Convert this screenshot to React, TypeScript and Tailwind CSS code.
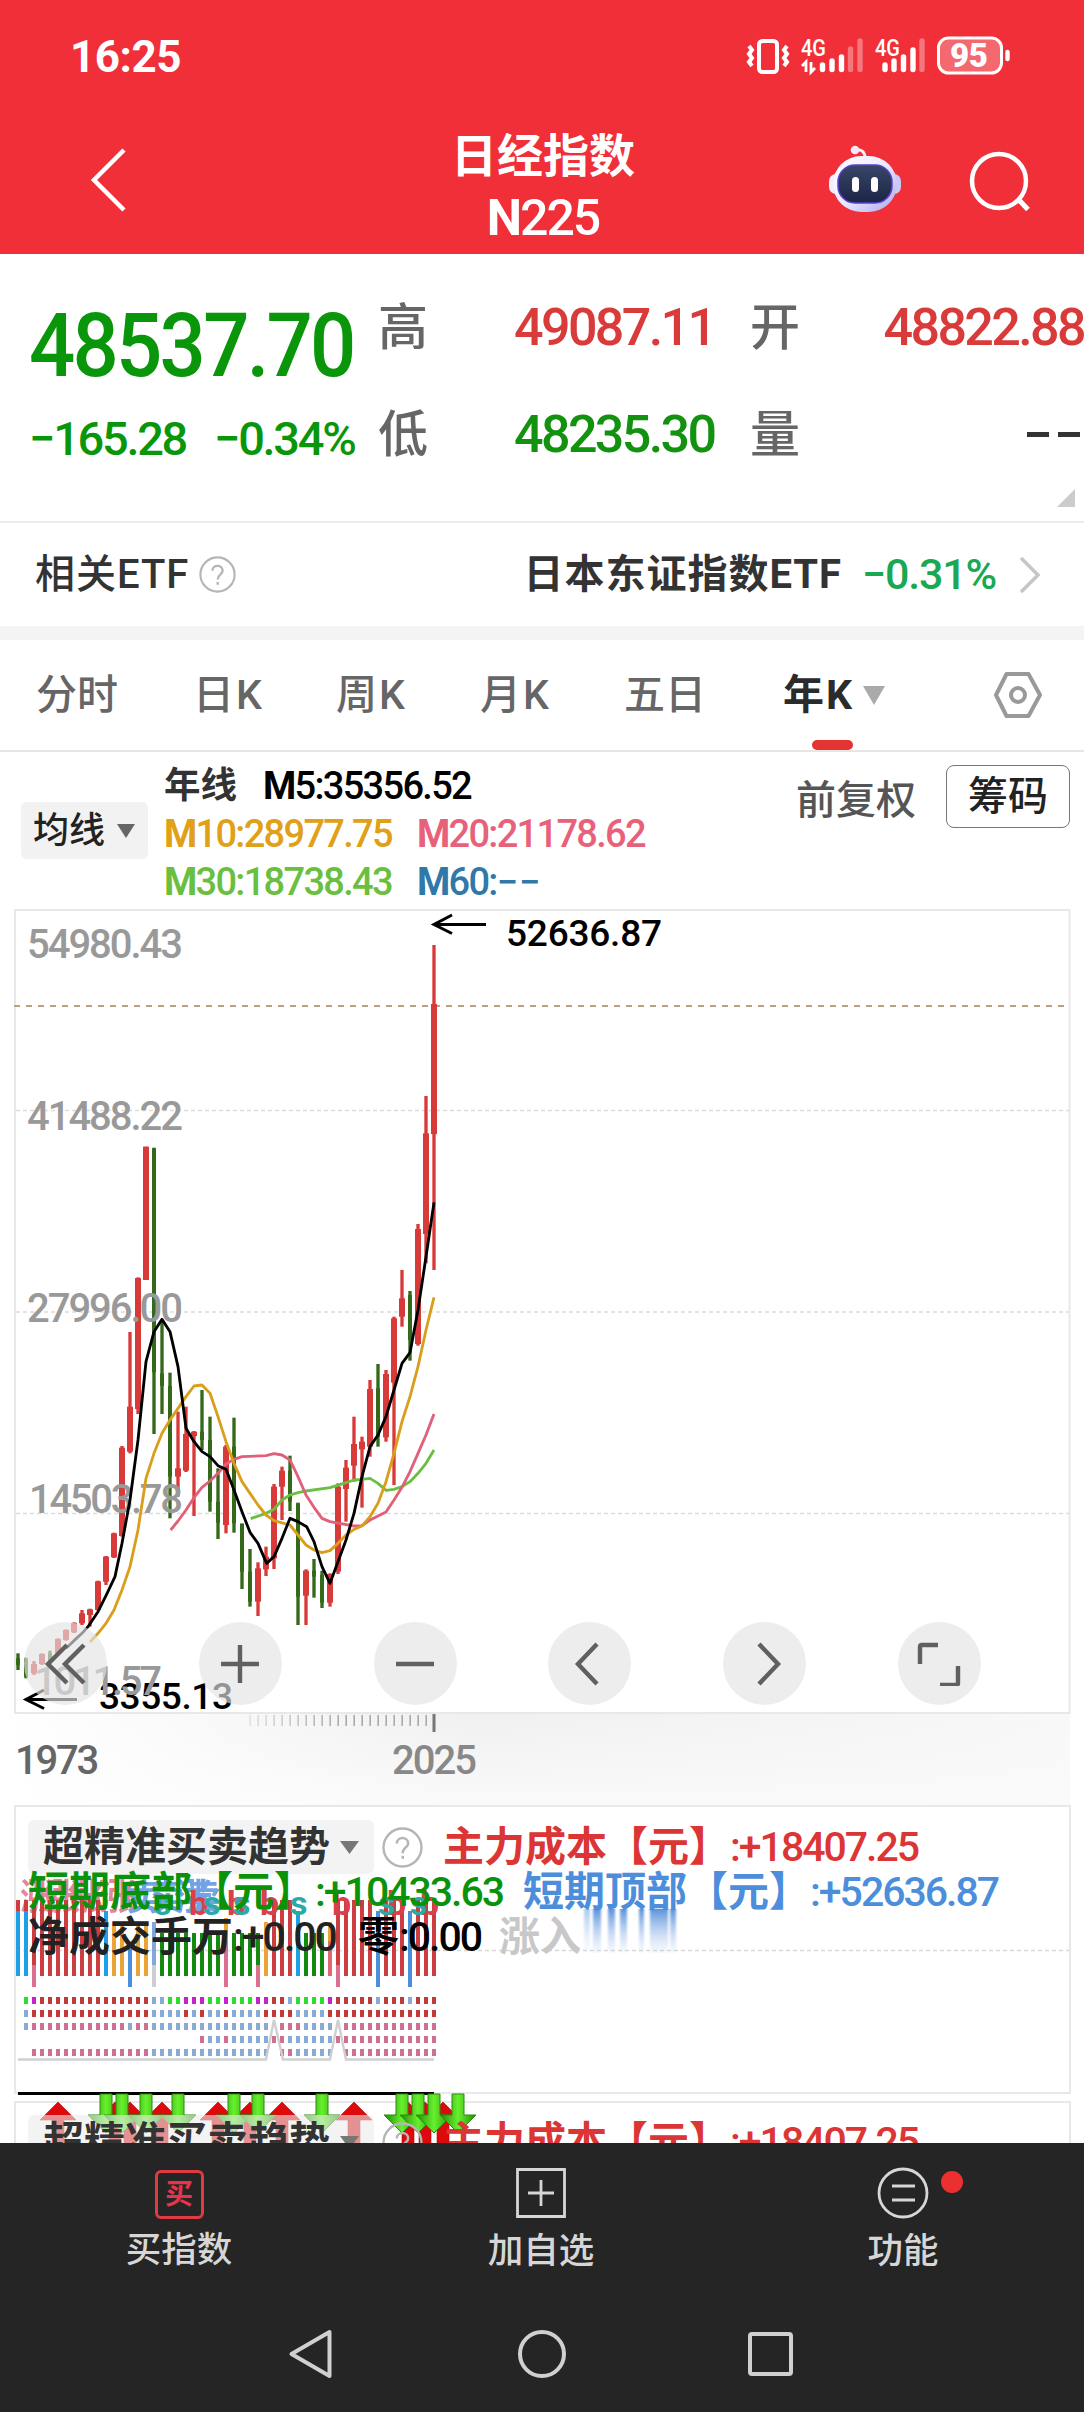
import type { ReactNode } from 'react'

const RED = '#d83a3a'
const GREEN = '#35691a'

// [高, 実体上, 実体下, 安] / up = 陽線
type Candle = [number, number, number, number, boolean]

const candles: Candle[] = [
  [1060, 1075, 1095, 1110, false],
  [1073, 1078, 1130, 1135, false],
  [1083, 1092, 1120, 1125, true],
  [1060, 1062, 1092, 1095, true],
  [1052, 1060, 1085, 1090, false],
  [1015, 1017, 1060, 1062, true],
  [988, 990, 1020, 1022, true],
  [967, 969, 997, 999, true],
  [930, 940, 970, 975, true],
  [926, 928, 945, 980, true],
  [842, 844, 930, 932, true],
  [768, 770, 845, 855, true],
  [698, 700, 772, 774, true],
  [438, 443, 708, 710, true],
  [96, 320, 455, 460, true],
  [-68, -66, 327, 342, true],
  [-460, -460, -60, -60, true],
  [-457, -455, 217, 402, false],
  [65, 220, 258, 342, false],
  [218, 258, 530, 655, false],
  [335, 505, 530, 590, true],
  [320, 402, 512, 516, true],
  [393, 395, 408, 648, true],
  [270, 395, 420, 450, false],
  [350, 420, 605, 635, false],
  [505, 605, 668, 717, false],
  [435, 440, 675, 700, true],
  [353, 440, 670, 698, false],
  [670, 672, 815, 867, false],
  [747, 815, 905, 920, false],
  [787, 805, 905, 948, true],
  [740, 770, 808, 828, true],
  [552, 560, 775, 807, true],
  [500, 512, 560, 660, true],
  [467, 512, 605, 633, false],
  [608, 610, 890, 975, false],
  [808, 812, 887, 975, true],
  [777, 812, 830, 893, false],
  [812, 825, 908, 924, false],
  [820, 822, 908, 920, true],
  [550, 560, 815, 822, true],
  [480, 503, 567, 665, true],
  [350, 432, 497, 545, true],
  [410, 425, 448, 623, true],
  [240, 267, 440, 470, true],
  [192, 265, 410, 440, false],
  [210, 222, 412, 425, true],
  [50, 55, 248, 555, true],
  [-90, -5, 50, 80, true],
  [-27, -15, 120, 182, false],
  [-228, -213, 132, 137, true],
  [-612, -500, -198, -110, true],
  [-1065, -888, -498, -90, true],
]

const ma5 =
  '198,1045 222,1022 246,1000 264,980 294,935 318,887 345,830 366,730 390,600 414,420 438,185 462,95 486,58 510,95 534,200 558,385 582,425 606,455 630,470 654,497 678,508 702,570 726,635 750,697 774,730 800,790 822,770 846,715 870,655 894,665 920,680 942,725 966,800 990,850 1014,785 1038,720 1062,640 1086,530 1110,440 1134,405 1158,350 1182,270 1206,190 1230,158 1254,30 1278,-130 1302,-293'
const ma10 =
  '270,1026 294,1000 318,970 342,930 366,870 390,800 414,690 438,535 462,460 486,400 510,360 534,325 558,290 582,258 606,255 630,280 654,350 678,425 702,490 726,545 750,580 774,615 798,645 822,662 870,675 894,705 918,735 942,750 966,758 990,752 1014,730 1038,705 1062,688 1086,678 1110,650 1134,610 1158,545 1182,460 1206,365 1230,290 1254,200 1278,90 1302,-8'
const ma20 =
  '512,690 534,663 558,630 582,593 606,562 630,543 654,520 678,492 702,478 726,470 798,467 822,461 846,465 870,480 894,530 918,585 942,622 966,655 990,665 1062,678 1086,677 1110,660 1158,636 1182,600 1206,562 1230,515 1254,460 1278,405 1302,342'
const ma30 =
  '752,656 798,640 822,628 846,600 870,585 894,578 918,573 990,563 1038,548 1062,540 1086,538 1110,535 1134,550 1158,571 1182,568 1206,560 1230,545 1254,520 1278,490 1302,450'

// 副图: r 红 b 蓝 o 橙 d 深蓝 y 灰 g 绿 p 粉
const bars = 'bbprrrrrrrrboodooyggggggggpgggporrrbgggkprrrrdrrrdrrr'

const dotRows = [
  '.gmrrrrrrrrrrrrrrbbggmmmggmgggmmrrbggggmrrrrrbrrrbrrr',
  '.brrrrrrrrrrrrrrrbbbbrbrbbrbbbbrrrrbbbbrrrrrrrrrrrrrr',
  '.bppppppppppppbppbbbbbbbbbbbbbbb.pppbbbb.pppppppppppp',
  '.......................pbbpbbbbbppbbbbbbpppppppppppp',
  '..pppppppppppppppbbbbbbbbbbbbbbb.ppbbbbb.pppppppppppp',
].map((row) => row.padEnd(53, 'p'))

const dotColor: Record<string, string> = {
  g: '#28e02c',
  m: '#c81fd0',
  r: '#c03a3a',
  b: '#86abd9',
  p: '#cf6f92',
}

const upArrows = [58, 115, 130, 162, 218, 250, 282, 354, 408, 425, 443]
const downArrows = [106, 122, 146, 178, 234, 258, 322, 402, 418, 434, 458]

function Bar({ k, i }: { k: string; i: number }) {
  const x = 16 + i * 8
  const rect = (y: number, b: number, fill: string) => (
    <rect key={fill + y} x={x} y={y} width={4} height={b - y} fill={fill} />
  )
  switch (k) {
    case 'r':
      return rect(1899, 1975, '#cc3d42')
    case 'b':
      return (
        <g>
          {i < 2 && rect(1899, 1910, '#cc3d42')}
          {rect(1910, 1975, '#1e9fe6')}
        </g>
      )
    case 'g':
      return rect(1932, 1975, '#14890f')
    case 'o':
      return rect(1921, 1975, '#eba437')
    case 'k':
      return <g>{rect(1921, 1940, '#eba437')}{rect(1940, 1975, '#dd6a72')}</g>
    case 'd':
      return <g>{rect(i > 40 ? 1910 : 1948, 1986, '#4a8fdc')}</g>
    case 'y':
      return <g>{rect(1921, 1964, '#7fa8dd')}{rect(1964, 1986, '#cdcdd2')}</g>
    default:
      return (
        <g>
          {i === 26 ? rect(1917, 1940, '#eba437') : rect(i === 30 ? 1932 : 1899, 1964, i === 30 ? '#14890f' : '#cc3d42')}
          {rect(i === 26 ? 1940 : 1964, 1986, '#da6f90')}
        </g>
      )
  }
}

function StatusBar() {
  return (
    <div className="flex h-[113px] items-center pl-[70px] pr-[73px]">
      <span className="mt-px text-[44px] font-bold leading-none tracking-[-0.5px]">16:25</span>
      <svg className="ml-auto" width="265" height="42" viewBox="746 36 265 42" fill="none">
        <rect x="759" y="41" width="18" height="31" rx="3.5" stroke="#fff" strokeWidth="4" />
        <path d="M749 46l3 4-3 4 3 4-3 4 3 4M787 46l-3 4 3 4-3 4 3 4-3 4" stroke="#fff" strokeWidth="4" />
        <text x="801" y="56" fill="#fff" fontSize="23" fontWeight="500" textLength="25" lengthAdjust="spacingAndGlyphs">4G</text>
        <text x="875" y="56" fill="#fff" fontSize="23" fontWeight="500" textLength="25" lengthAdjust="spacingAndGlyphs">4G</text>
        <path d="M806 72V62l-4 4M811 62v10l4-4" stroke="#fff" strokeWidth="2.8" />
        <g stroke="#fff" strokeWidth="5.4" strokeLinecap="round">
          <path d="M822.5 65v4.500M832 61v8.500M841.500 57v12.500M885 65v4.500M894 61v8.500M903.500 57v12.500M913 50v19.500" />
          <path opacity=".35" d="M850.500 49v20.500M860 41v28.500M922 41v28.500" />
        </g>
        <rect x="938.500" y="38" width="63" height="35" rx="10" fill="#fff" fillOpacity=".28" stroke="#fff" strokeWidth="3" />
        <path d="M1007.500 52v7" stroke="#fff" strokeWidth="4.400" strokeLinecap="round" />
        <text x="950" y="67" fill="#fff" fontSize="33" fontWeight="900" textLength="38">95</text>
      </svg>
    </div>
  )
}

function Robot() {
  return (
    <svg width="74" height="70" viewBox="0 0 74 70">
      <defs>
        <linearGradient id="head" x1="0" y1="0" x2="1" y2="1">
          <stop offset="0" stopColor="#fff" />
          <stop offset=".5" stopColor="#ecebff" />
          <stop offset="1" stopColor="#a9a4f0" />
        </linearGradient>
        <linearGradient id="face" x1="0" y1="0" x2="0" y2="1">
          <stop offset="0" stopColor="#3a4668" />
          <stop offset="1" stopColor="#1b2545" />
        </linearGradient>
      </defs>
      <path d="M27 6c7-1 10 2 10 8" fill="none" stroke="#f6efff" strokeWidth="3" />
      <circle cx="27" cy="6" r="4.300" fill="#f3e9fb" />
      <rect x="1" y="30" width="14" height="20" rx="7" fill="#eeeefc" />
      <rect x="59" y="30" width="14" height="20" rx="7" fill="#c9c8f6" />
      <rect x="5" y="12" width="64" height="56" rx="28" fill="url(#head)" />
      <rect x="10" y="21" width="54" height="38" rx="17" fill="url(#face)" stroke="#5a3fd0" strokeWidth="1.500" />
      <rect x="24" y="33" width="7" height="15" rx="3.500" fill="#fff" />
      <rect x="43" y="33" width="7" height="15" rx="3.500" fill="#fff" />
    </svg>
  )
}

function Header() {
  return (
    <header className="h-[254px] bg-[#f02f38] text-white">
      <StatusBar />
      <div className="flex h-[141px] items-start px-[51px]">
        <svg className="mt-[31px] ml-[38px]" width="40" height="70" viewBox="0 0 40 70" fill="none">
          <path d="M35 6L5 36l30 30" stroke="#fff" strokeWidth="4.500" />
        </svg>
        <div className="ml-[252px] w-[324px] text-center leading-none">
          <div className="mt-[20px] text-[46px] font-bold">日经指数</div>
          <div className="mt-[14px] text-[50px] font-medium tracking-[-2px]">
            <b>N</b>225
          </div>
        </div>
        <div className="mt-[31px] ml-[123px]">
          <Robot />
        </div>
        <svg className="mt-[37px] ml-[67px]" width="64" height="66" viewBox="0 0 64 66" fill="none">
          <circle cx="30" cy="31" r="27" stroke="#fff" strokeWidth="4.500" />
          <path d="M50 50l9 9.500" stroke="#fff" strokeWidth="5" />
        </svg>
      </div>
    </header>
  )
}

function Quote() {
  return (
    <section className="relative flex h-[269px] border-b-2 border-[#ececec] font-medium text-[#666]">
      <div className="w-[378px] pl-[29px] leading-none text-[#0a960a]">
        <div className="mt-[47px] w-[349px] origin-left scale-x-[0.915] text-[89px] tracking-[-3px]">48537.70</div>
        <div className="mt-[25px] flex text-[47px] tracking-[-2.300px]">
          <span className="w-[185px]">−165.28</span>
          <span>−0.34%</span>
        </div>
      </div>
      <div className="mt-[20px] grid h-[214px] flex-1 grid-cols-[136px_236px_120px_1fr] grid-rows-2 items-center text-[50px] leading-none">
        <span>高</span>
        <span className="text-[52px] tracking-[-2.600px] text-[#d93a3a]">49087.11</span>
        <span>开</span>
        <span className="text-right text-[52px] tracking-[-2.600px] text-[#d93a3a]">48822.88</span>
        <span>低</span>
        <span className="text-[52px] tracking-[-2.600px] text-[#12920f]">48235.30</span>
        <span>量</span>
        <span className="flex justify-end gap-[9px] pr-[4px]">
          <i className="h-[5px] w-[22px] bg-[#333]" />
          <i className="h-[5px] w-[22px] bg-[#333]" />
        </span>
      </div>
      <svg className="absolute right-[9px] bottom-[14px]" width="18" height="18" viewBox="0 0 18 18">
        <path d="M18 0v18H0z" fill="#ccc" />
      </svg>
    </section>
  )
}

function Help({ size }: { size: number }) {
  return (
    <svg width={size} height={size} viewBox="0 0 40 40" fill="none">
      <circle cx="20" cy="20" r="18.500" stroke="#b5b5b5" strokeWidth="2.300" />
      <path d="M14.500 16c0-7 11-7 11 0 0 4-5.300 4-5.300 9.500M20.200 28v3" stroke="#b5b5b5" strokeWidth="2.500" />
    </svg>
  )
}

function EtfRow() {
  return (
    <section className="flex h-[103px] items-center pr-[42px] pl-[35px] text-[40px] leading-none text-[#333]">
      <span className="mr-[8px] w-[156px] font-medium whitespace-nowrap tracking-[1px]">相关ETF</span>
      <Help size={37} />
      <span className="ml-auto font-bold tracking-[1px]">日本东证指数ETF</span>
      <span className="ml-[20px] text-[43px] font-medium tracking-[-1.200px] text-[#1aa853]">−0.31%</span>
      <svg className="ml-[22px]" width="24" height="38" viewBox="0 0 24 38" fill="none">
        <path d="M3 2l17 17L3 36" stroke="#c6c6c6" strokeWidth="3.500" />
      </svg>
    </section>
  )
}

function Tabs() {
  return (
    <nav className="flex h-[112px] items-center border-b-2 border-[#e6e6e6] pl-[36px] text-[41px] leading-none font-medium text-[#666]">
      <span className="w-[157px]">分时</span>
      <span className="w-[143px] tracking-[2px]">日K</span>
      <span className="w-[144px] tracking-[2px]">周K</span>
      <span className="w-[144px] tracking-[2px]">月K</span>
      <span className="w-[159px]">五日</span>
      <span className="relative flex h-full w-[210px] items-center font-bold tracking-[2px] text-[#2b2b2b]">
        年K
        <svg className="ml-[9px]" width="22" height="19" viewBox="0 0 22 19">
          <path d="M0 0h22L11 19z" fill="#aaa" />
        </svg>
        <i className="absolute bottom-0 left-[29px] h-[10px] w-[41px] rounded-full bg-[#e43333]" />
      </span>
      <svg width="50" height="48" viewBox="0 0 50 48" fill="none">
        <path d="M13.500 3h22L47 24 35.500 45h-22L3 24z" stroke="#999" strokeWidth="4" strokeLinejoin="round" />
        <circle cx="25" cy="24" r="7" stroke="#999" strokeWidth="4" />
      </svg>
    </nav>
  )
}

function MaLegend() {
  return (
    <section className="flex h-[157px] text-[#222]">
      <div className="mt-[50px] ml-[21px] flex h-[57px] w-[127px] items-center rounded-md bg-[#f2f2f2] pl-[12px] text-[36px] leading-none font-medium">
        均线
        <svg className="ml-[12px]" width="18" height="14" viewBox="0 0 18 14">
          <path d="M0 0h18L9 14z" fill="#666" />
        </svg>
      </div>
      <div className="mt-[10px] ml-[16px] w-[632px] text-[38px] leading-[48px] font-medium tracking-[-1.700px]">
        <div className="flex h-[48px]">
          <span className="mr-[26px] w-[73px] text-[36.500px] font-bold tracking-normal text-[#333]">年线</span>
          <span className="text-black"><b>M</b>5:35356.52</span>
        </div>
        <div className="flex h-[48px]">
          <span className="w-[253px] text-[#e0a017]"><b>M</b>10:28977.75</span>
          <span className="text-[#e8617a]"><b>M</b>20:21178.62</span>
        </div>
        <div className="flex h-[48px]">
          <span className="w-[253px] text-[#6abf40]"><b>M</b>30:18738.43</span>
          <span className="text-[#2f78a8]"><b>M</b>60:<span className="tracking-[1px]">−−</span></span>
        </div>
      </div>
      <span className="mt-[29px] w-[150px] text-[40px] leading-none font-medium text-[#555]">前复权</span>
      <span className="mt-[13px] flex h-[63px] w-[124px] items-center justify-center rounded-lg border-[1.5px] border-[#777] text-[40px] leading-none font-medium">
        筹码
      </span>
    </section>
  )
}

function Control({ children }: { children: ReactNode }) {
  return (
    <button className="flex size-[83px] items-center justify-center rounded-full bg-[#e3e3e3]/65">
      <svg width="44" height="44" viewBox="0 0 44 44" fill="none" stroke="#606060" strokeWidth="4.400">
        {children}
      </svg>
    </button>
  )
}

function KLine() {
  const label = { fontSize: 40, fontWeight: 500, fill: '#999', textLength: 156 }
  return (
    <section className="relative h-[805px]">
      <svg className="block" width="1084" height="805" viewBox="0 909 1084 805" fill="none">
        <rect x="15" y="910" width="1054.500" height="803" stroke="#e8e8e8" strokeWidth="2" />
        <path d="M16 1110.500H1069M16 1312H1069M16 1513.500H1069" stroke="#dcdcdc" strokeWidth="1.500" strokeDasharray="4 3" />
        <path d="M14 1006H1069" stroke="#b9a27c" strokeWidth="2" strokeDasharray="6 6" />
        <g transform="translate(0 1300) scale(.33333)">
          {candles.map(([h, t, b, l, up], i) => {
            const x = 54 + i * 24
            const c = up ? RED : GREEN
            const w = up ? 18 : 12
            return (
              <g key={i} fill={c}>
                <rect x={x - 5} y={h} width={10} height={l - h} />
                <rect x={x - w / 2} y={t} width={w} height={b - t} />
              </g>
            )
          })}
        </g>
        <g>
          <text x="27" y="957.500" {...label}>54980.43</text>
          <text x="27" y="1129.500" {...label}>41488.22</text>
          <text x="27" y="1321.500" {...label}>27996.00</text>
          <text x="29" y="1512.500" {...label} textLength={154}>14503.78</text>
        </g>
        <g transform="translate(0 1300) scale(.33333)" strokeWidth="8.500" strokeLinejoin="round">
          <polyline points={ma30} stroke="#6abf40" />
          <polyline points={ma20} stroke="#e0607a" />
          <polyline points={ma10} stroke="#d99f1c" />
          <polyline points={ma5} stroke="#000" />
        </g>
        <path d="M486 924.500H436M452 915l-18 9.500 18 9" stroke="#000" strokeWidth="3" />
        <text x="506" y="945.500" fill="#000" fontSize="37" fontWeight="500" textLength="156">52636.87</text>
        <path d="M77 1699.500H28M44 1690l-18 9.500 18 9" stroke="#000" strokeWidth="3" />
        <text x="99" y="1709" fill="#000" fontSize="37" fontWeight="500" textLength="134">3355.13</text>
        <text x="34" y="1694.500" {...label} textLength={128}>1011.57</text>
      </svg>
      <div className="absolute top-[713px] left-[24px] flex w-[957px] justify-between">
        <Control><path d="M23 3L4 22l19 19M40 3L21 22l19 19" /></Control>
        <Control><path d="M22 3v38M3 22h38" /></Control>
        <Control><path d="M3 22h38" /></Control>
        <Control><path d="M29 2L10 22l19 20" /></Control>
        <Control><path d="M16 2l19 20-19 20" /></Control>
        <Control><path d="M3 22V5q0-2 2-2h16M41 24v17q0 2-2 2H23" /></Control>
      </div>
    </section>
  )
}

function Axis() {
  return (
    <section className="mr-[14px] h-[91px] bg-linear-to-b from-[#f0f0f0] to-[#fafafa]">
      <div className="flex h-full bg-linear-to-r from-white via-transparent via-45% to-[#fafafa]/80 pl-[15px]">
        <span className="mt-[27px] w-[377px] text-[40px] leading-none font-medium tracking-[-2.200px] text-[#666]">1973</span>
        <span className="mt-[27px] text-[40px] leading-none font-medium tracking-[-2px] text-[#888]">2025</span>
      </div>
    </section>
  )
}

function Ticks() {
  return (
    <svg className="absolute top-[1714px] left-0" width="450" height="20" viewBox="0 1714 450 20">
      {Array.from({ length: 23 }, (_, i) => (
        <rect key={i} x={249.500 + i * 8} y="1715" width="1.300" height="11" fill="#999" opacity={Math.min(1, 0.3 + i * 0.06)} />
      ))}
      <rect x="432.500" y="1714" width="3" height="18" fill="#777" />
    </svg>
  )
}

function IndicatorTitle() {
  return (
    <div className="flex items-center">
      <div className="flex h-[54px] w-[346px] items-center rounded-md bg-[#ebebeb]/60 pl-[15px] font-bold text-[#333]">
        超精准买卖趋势
        <svg className="ml-[10px]" width="19" height="13" viewBox="0 0 19 13">
          <path d="M0 0h19L9.500 13z" fill="#777" />
        </svg>
      </div>
      <span className="ml-[8px]"><Help size={41} /></span>
      <span className="ml-[20px] flex text-[#dc3535]">
        <b>主力成本【元】</b>
        <Digits>:+18407.25</Digits>
      </span>
    </div>
  )
}

function Digits({ children }: { children: ReactNode }) {
  return <span className="text-[41px] font-medium tracking-[-2px]">{children}</span>
}

function SubChart() {
  return (
    <svg className="absolute -top-[2px] -left-[16px]" width="1084" height="292" viewBox="0 1804 1084 292" fill="none">
      <path d="M16 1949.500H1069" stroke="#d8d8d8" strokeWidth="1.300" strokeDasharray="4 3" />
      <g fontSize="36" fontWeight="700" opacity=".85">
        <g fill="#e0708f">
          <text x="20" y="1909">涨</text>
          <text x="44" y="1909">涨</text>
          <text x="70" y="1909">涨</text>
          <text x="100" y="1909">涨</text>
        </g>
        <g fill="#5b93e0">
          <text x="126" y="1909">卖</text>
          <text x="148" y="1909">卖</text>
          <text x="176" y="1909">涨</text>
          <text x="185" y="1909">卖</text>
        </g>
      </g>
      {bars.split('').map((k, i) => (
        <Bar key={i} k={k} i={i} />
      ))}
      <g fontSize="34" fontWeight="700">
        <g fill="#d8404a">
          <text x="227" y="1914">b</text>
          <text x="260" y="1914">b</text>
          <text x="332" y="1914">b</text>
          <text x="387" y="1914">b</text>
          <text x="420" y="1914">b</text>
          <text x="189" y="1914">b</text>
        </g>
        <g fill="#2ba9a6">
          <text x="154" y="1914">s</text>
          <text x="203" y="1914">s</text>
          <text x="233" y="1914">s</text>
          <text x="290" y="1914">s</text>
          <text x="378" y="1914">s</text>
          <text x="410" y="1914">s</text>
        </g>
      </g>
      {dotRows.map((row, r) =>
        row.split('').map((k, i) =>
          k === '.' ? null : (
            <rect key={r + '-' + i} x={16 + i * 8} y={1996 + r * 13} width="4" height="7" fill={dotColor[k]} />
          ),
        ),
      )}
      <path d="M18 2058.500H266l8-39.500 9 39.500h47l8-39.500 8 39.500H434" stroke="#cfcfcf" strokeWidth="2.400" />
      <path d="M18 2092.500H434" stroke="#000" strokeWidth="3" />
      <defs>
        <linearGradient id="smear" x1="0" y1="0" x2="0" y2="1">
          <stop offset="0" stopColor="#4a86d8" stopOpacity=".9" />
          <stop offset="1" stopColor="#c4d8f4" stopOpacity=".15" />
        </linearGradient>
        <filter id="soft" x="-10%" width="120%"><feGaussianBlur stdDeviation="1.200 0" /></filter>
      </defs>
      <g fill="url(#smear)" filter="url(#soft)">
        <rect x="584" y="1908" width="6" height="44" opacity=".5" />
        <rect x="593" y="1908" width="8" height="44" />
        <rect x="608" y="1908" width="7" height="44" />
        <rect x="620" y="1908" width="7" height="44" />
        <rect x="639" y="1908" width="5" height="44" />
        <rect x="650" y="1908" width="18" height="44" />
        <rect x="670" y="1908" width="6" height="44" />
      </g>
    </svg>
  )
}

function Signals() {
  return (
    <svg className="absolute -top-[10px] -left-[16px]" width="520" height="56" viewBox="0 2092 520 56">
      <defs>
        <linearGradient id="down">
          <stop offset="0" stopColor="#258a08" />
          <stop offset=".5" stopColor="#66f02c" />
          <stop offset="1" stopColor="#258a08" />
        </linearGradient>
      </defs>
      {upArrows.map((x) => (
        <path key={x} d={`M${x} 2101l18 18h-12v29h-12v-29h-12z`} fill="#dd0a0c" stroke="#a50a0a" strokeWidth=".6" />
      ))}
      {downArrows.map((x) => (
        <path key={x} d={`M${x - 6} 2093h12v21h12l-18 18-18-18h12z`} fill="url(#down)" stroke="#2c8a10" strokeWidth="1" />
      ))}
    </svg>
  )
}

function Indicators() {
  return (
    <div className="text-[41px] leading-[45px] whitespace-nowrap">
      <section className="relative ml-[14px] h-[289px] w-[1057px] border-2 border-[#e8e8e8] pl-[12px]">
        <SubChart />
        <div className="relative -mt-px pt-[14px]">
          <IndicatorTitle />
          <div className="-mt-[4px] flex h-[45px]">
            <span className="flex w-[495px] text-[#0b920b]">
              <b>短期底部【元】</b>
              <Digits>:+10433.63</Digits>
            </span>
            <span className="flex text-[#4c8edc]">
              <b>短期顶部【元】</b>
              <Digits>:+52636.87</Digits>
            </span>
          </div>
          <div className="flex h-[45px] text-[#222]">
            <span className="flex w-[330px]">
              <b>净成交手万</b>
              <Digits>:+0.00</Digits>
            </span>
            <span className="flex w-[141px] text-black">
              <b>零</b>
              <Digits>:0.00</Digits>
            </span>
            <b className="text-[#c8c8c8]">涨入</b>
          </div>
        </div>
      </section>
      <section className="relative mt-[7px] ml-[14px] h-[120px] w-[1057px] border-2 border-[#e8e8e8] pl-[12px]">
        <Signals />
        <div className="relative pt-[12px]">
          <IndicatorTitle />
        </div>
      </section>
    </div>
  )
}

function BottomBar() {
  return (
    <footer className="h-[269px] bg-[#252525] text-[35.500px] leading-none font-medium text-[#d6d6d6]">
      <div className="-ml-[2px] grid h-[150px] grid-cols-3">
        <div className="flex flex-col items-center pt-[27px]">
          <span className="flex size-[49px] items-center justify-center rounded-md border-3 border-[#e03a42] text-[28px] font-bold text-[#e8334a]">
            买
          </span>
          <span className="mt-[14px]">买指数</span>
        </div>
        <div className="flex flex-col items-center pt-[25px]">
          <svg width="50" height="50" viewBox="0 0 50 50" fill="none" stroke="#d6d6d6" strokeWidth="2.800">
            <path d="M1.500 1.500h47v47h-47zM25 12v26M12 25h26" />
          </svg>
          <span className="mt-[16px]">加自选</span>
        </div>
        <div className="relative flex flex-col items-center pt-[24px]">
          <svg width="52" height="52" viewBox="0 0 52 52" fill="none" stroke="#d6d6d6" strokeWidth="2.800">
            <circle cx="26" cy="26" r="24" />
            <path d="M15 19h23M15 33h23" />
          </svg>
          <i className="absolute top-[28px] left-[219px] size-[22px] rounded-full bg-[#ec3030]" />
          <span className="mt-[15px]">功能</span>
        </div>
      </div>
      <div className="flex items-start pl-[287px]">
        <svg className="mt-[35px]" width="48" height="52" viewBox="0 0 48 52" fill="none">
          <path d="M42.500 4v44L4.500 26z" stroke="#d0d0d0" strokeWidth="4" strokeLinejoin="round" />
        </svg>
        <svg className="mt-[36px] ml-[182px]" width="50" height="50" viewBox="0 0 50 50" fill="none">
          <circle cx="25" cy="25" r="22" stroke="#d0d0d0" strokeWidth="4" />
        </svg>
        <span className="mt-[39px] ml-[181px] h-[44px] w-[45px] rounded-sm border-4 border-[#d0d0d0]" />
      </div>
    </footer>
  )
}

export default function App() {
  return (
    <div className="h-[2412px] w-[1084px] overflow-hidden bg-white font-[Roboto,'Noto_Sans_CJK_SC',sans-serif]">
      <div className="relative h-[2143px] overflow-hidden">
        <Header />
        <Quote />
        <EtfRow />
        <div className="h-[14px] bg-[#f4f4f4]" />
        <Tabs />
        <MaLegend />
        <KLine />
        <Axis />
        <Ticks />
        <Indicators />
      </div>
      <BottomBar />
    </div>
  )
}
